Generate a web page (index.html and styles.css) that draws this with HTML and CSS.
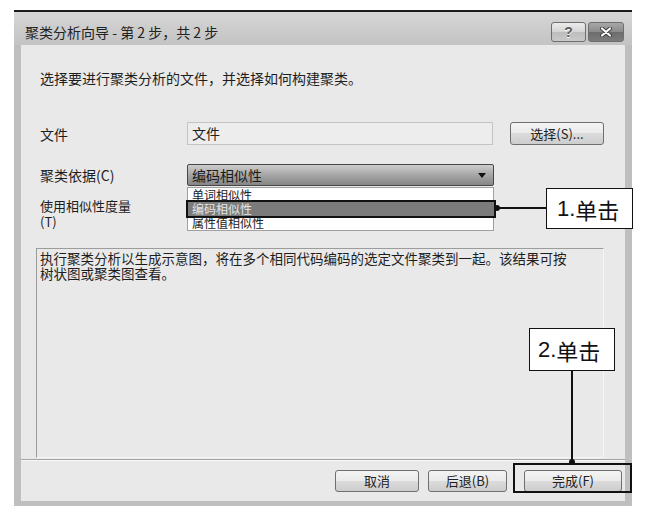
FILE: index.html
```html
<!DOCTYPE html>
<html lang="zh-CN">
  <head>
    <meta charset="UTF-8" />
    <meta name="viewport" content="width=device-width, initial-scale=1.0" />
    <title>聚类分析向导</title>
    <link rel="stylesheet" href="styles.css">
  </head>
  <body>
    <div class="window">
      <div class="titlebar">
        <span class="title">聚类分析向导 - 第 2 步，共 2 步</span>
        <div class="title-buttons">
          <span class="tb tb-help">?</span>
          <span class="tb tb-close">
            <svg width="14" height="10" viewBox="0 0 14 10">
              <path d="M3 1.5 L11 8.5 M11 1.5 L3 8.5" stroke="#3a3a3a" stroke-width="4" stroke-linecap="round" />
              <path d="M3 1.5 L11 8.5 M11 1.5 L3 8.5" stroke="#fff" stroke-width="2.2" stroke-linecap="round" />
            </svg>
          </span>
        </div>
      </div>

      <div class="panel">
        <div class="main">
          <p class="intro">选择要进行聚类分析的文件，并选择如何构建聚类。</p>

          <div class="form">
            <label class="form-label">文件</label>
            <div class="field">文件</div>
            <button class="btn">选择(S)...</button>

            <label class="form-label">聚类依据(C)</label>
            <div class="select">
              编码相似性
              <span class="arrow"></span>
              <!-- open dropdown list -->
              <ul class="options">
                <li>单词相似性</li>
                <li class="selected">编码相似性</li>
                <li>属性值相似性</li>
              </ul>
            </div>
            <span></span>

            <label class="form-label multi">使用相似性度量<br />(T)</label>
          </div>

          <div class="desc">
            执行聚类分析以生成示意图，将在多个相同代码编码的选定文件聚类到一起。该结果可按<br />树状图或聚类图查看。
          </div>
        </div>

        <div class="footer">
          <button class="btn btn-cancel">取消</button>
          <button class="btn btn-back">后退(B)</button>
          <button class="btn btn-finish">完成(F)</button>
        </div>
      </div>
    </div>

    <!-- Callouts drawn over the dialog -->
    <div class="connector connector-1"></div>
    <div class="callout callout-1"><span class="num">1.</span>单击</div>

    <div class="callout callout-2"><span class="num">2.</span>单击</div>
    <div class="connector connector-2"></div>
    <div class="focus-box"></div>
  </body>
</html>
```

FILE: styles.css
```css
:root {
  --frame: #bfbfbf;
  --panel-bg: #e9e9e9;
  --text: #1e1e1e;
  --ink: #111;
}
body {
  margin: 0;
  background: #fff;
  color: var(--text);
  font-family: "Noto Sans CJK SC", sans-serif;
}

.window {
  margin: 10px 0 0 14px;
  width: 618px;
  box-sizing: border-box;
  border-top: 2px solid #1c1c1c;
  padding: 0 7px 5px;
  background: linear-gradient(#d6d6d6, #c3c3c3 33px, var(--frame) 33px);
}

/* Title bar */
.titlebar {
  height: 33px;
  display: flex;
  justify-content: space-between;
  padding: 0 1px 0 4px;
}
.title {
  font-size: 14px;
  line-height: 40px;
  color: #222;
}
.title-buttons {
  display: flex;
  gap: 2px;
  margin-top: 10px;
}
.tb {
  width: 35px;
  height: 20px;
  box-sizing: border-box;
  border: 1px solid #6e6e6e;
  border-radius: 3px;
  display: flex;
  align-items: center;
  justify-content: center;
}
.tb-help {
  background: linear-gradient(#ececec, #d4d4d4 50%, #bdbdbd 50%, #c9c9c9);
  font-family: "Liberation Sans", sans-serif;
  font-weight: bold;
  font-size: 14px;
  color: #5e5e5e;
  text-shadow: 0 1px 0 #fff;
}
.tb-close {
  width: 36px;
  background: linear-gradient(#a8a8a8, #8a8a8a 50%, #6c6c6c 50%, #7c7c7c);
}

/* Content panel */
.panel {
  height: 456px;
  background: var(--panel-bg);
  display: flex;
  flex-direction: column;
}
.main {
  flex: 1;
  display: flex;
  flex-direction: column;
  padding: 24px 0 1px 19px;
}
.intro {
  margin: 0;
  font-size: 14px;
  line-height: 18px;
}

.form {
  margin-top: 35px;
  display: grid;
  grid-template-columns: 131px 307px 94px;
  grid-template-rows: 23px 22px auto;
  column-gap: 16px;
  row-gap: 19px;
}
.form-label {
  font-size: 14px;
  line-height: 18px;
  align-self: center;
}
.form-label.multi {
  align-self: start;
  margin-top: -7px;
  font-size: 13px;
  line-height: 16px;
}

.field {
  width: 306px;
  box-sizing: border-box;
  background: #ededed;
  border: 1px solid #c4c4c4;
  padding-left: 4px;
  font-size: 14px;
  line-height: 21px;
}

.btn {
  height: 23px;
  box-sizing: border-box;
  border: 1px solid #6f6f6f;
  border-radius: 3px;
  background: linear-gradient(#f3f3f3, #eaeaea 50%, #dcdcdc 50%, #cdcdcd);
  font-family: "Noto Sans CJK SC", sans-serif;
  font-size: 13px;
  line-height: 18px;
  color: #222;
  padding: 0;
}

.select {
  position: relative;
  box-sizing: border-box;
  height: 22px;
  border: 1px solid #474747;
  border-radius: 2px;
  background: linear-gradient(#cdcdcd, #a6a6a6 50%, #868686);
  padding-left: 4px;
  font-size: 14px;
  line-height: 20px;
  color: #1a1a1a;
}
.arrow {
  position: absolute;
  right: 7px;
  top: 8px;
  border-left: 4px solid transparent;
  border-right: 4px solid transparent;
  border-top: 5px solid #111;
}
.options {
  position: absolute;
  top: calc(100% + 2px);
  left: -1px;
  width: 307px;
  box-sizing: border-box;
  margin: 0;
  padding: 0;
  list-style: none;
  background: #fff;
  border: 1px solid #a0a0a0;
  z-index: 5;
}
.options li {
  height: 14px;
  line-height: 14px;
  padding-left: 4px;
  font-size: 12px;
  color: #222;
}
.options li.selected {
  background: #7b7b7b;
  color: #e6e6e6;
  box-shadow: 0 0 0 2px var(--ink);
  margin-right: -1px;
}

.desc {
  flex: 1;
  margin: 18px 0 0 -4px;
  width: 568px;
  box-sizing: border-box;
  border: 1px solid;
  border-color: #9c9c9c #f6f6f6 #f6f6f6 #9c9c9c;
  padding: 2px 3px;
  font-size: 13.5px;
  line-height: 15px;
}

/* Bottom button row */
.footer {
  height: 42px;
  box-sizing: border-box;
  border-top: 1px solid #a3a3a3;
  box-shadow: inset 0 1px 0 #f7f7f7;
  display: flex;
  justify-content: flex-end;
  padding: 10px 3px 0 0;
}
.footer .btn {
  height: 22px;
}
.btn-cancel {
  width: 84px;
}
.btn-back {
  width: 79px;
  margin-left: 9px;
}
.btn-finish {
  width: 98px;
  margin-left: 17px;
}

/* Annotation overlays */
.callout {
  position: absolute;
  box-sizing: border-box;
  background: #fff;
  border: 1px solid var(--ink);
  font-size: 22px;
  line-height: 1;
  color: var(--ink);
  display: flex;
  align-items: center;
  padding-left: 10px;
  z-index: 10;
}
.callout .num {
  font-family: "Liberation Sans", sans-serif;
}
.callout-1 {
  left: 546px;
  top: 188px;
  width: 87px;
  height: 41px;
}
.callout-2 {
  left: 529px;
  top: 328px;
  width: 86px;
  height: 43px;
  padding-left: 8px;
}

.connector {
  position: absolute;
  background: var(--ink);
  z-index: 9;
}
.connector::before {
  content: "";
  position: absolute;
  width: 6px;
  height: 6px;
  border-radius: 50%;
  background: var(--ink);
}
.connector-1 {
  left: 495px;
  top: 207px;
  width: 52px;
  height: 1.5px;
}
.connector-1::before {
  left: -1px;
  top: -2px;
}
.connector-2 {
  left: 571px;
  top: 371px;
  width: 1.5px;
  height: 92px;
}
.connector-2::before {
  left: -2px;
  bottom: -2px;
}

.focus-box {
  position: absolute;
  left: 513px;
  top: 463px;
  width: 119px;
  height: 30px;
  box-sizing: border-box;
  border: 2px solid var(--ink);
  z-index: 8;
}
```
